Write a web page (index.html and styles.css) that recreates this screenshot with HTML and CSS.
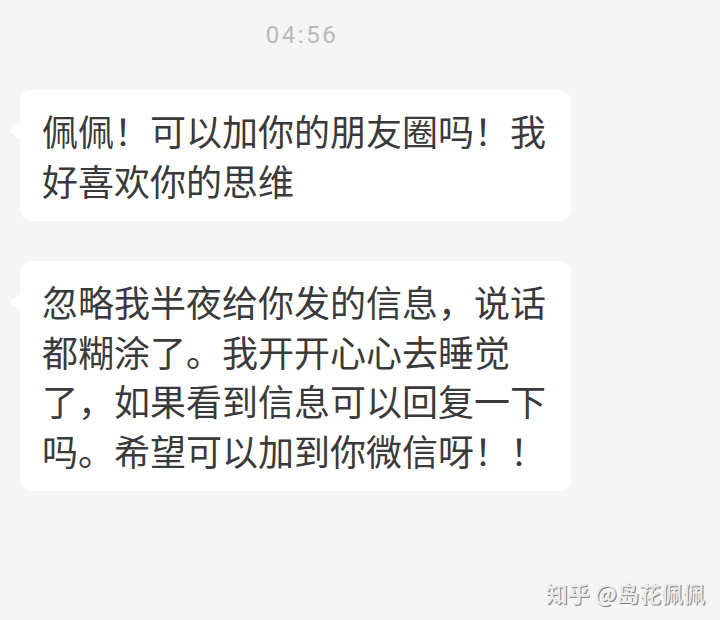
FILE: index.html
```html
<!DOCTYPE html>
<html lang="zh-CN">
<head>
    <meta charset="UTF-8">
    <meta name="viewport" content="width=device-width, initial-scale=1.0">
    <title>聊天记录</title>
    <link rel="stylesheet" href="styles.css">
</head>
<body>

<div class="chat">
    <div class="time">04:56</div>

    <div class="msg">
        <div class="bubble">佩佩！可以加你的朋友圈吗！我好喜欢你的思维</div>
    </div>

    <div class="msg">
        <div class="bubble">忽略我半夜给你发的信息，说话都糊涂了。我开开心心去睡觉了，如果看到信息可以回复一下吗。希望可以加到你微信呀！！</div>
    </div>
</div>

<div class="watermark">知乎 @岛花佩佩</div>

</body>
</html>
```

FILE: styles.css
```css
body {
    margin: 0;
    height: 620px;
    background-color: #f5f5f5;
    font-family: "Noto Sans CJK SC", "Noto Sans", sans-serif;
    position: relative;
    overflow: hidden;
}
.chat {
    padding: 20px 0 0 20px;
}
.time {
    text-align: center;
    padding-right: 136px;
    font-family: Roboto, "Liberation Sans", sans-serif;
    font-size: 24px;
    line-height: 30px;
    letter-spacing: 2.5px;
    color: #b9b9b9;
    margin-bottom: 40px;
}
.msg {
    margin-bottom: 40px;
}
.bubble {
    position: relative;
    width: 506px;
    padding: 16px 23px 16px 22px;
    background-color: #fff;
    border-radius: 12px;
    font-size: 36px;
    line-height: 49.5px;
    color: #3a3a3a;
}
.bubble::before {
    content: "";
    position: absolute;
    left: -11px;
    top: 32px;
    border-top: 9px solid transparent;
    border-bottom: 9px solid transparent;
    border-right: 12px solid #fff;
}
.watermark {
    position: absolute;
    right: 15px;
    bottom: 16px;
    font-size: 22px;
    line-height: 24px;
    font-weight: 700;
    color: #eaeaea;
    text-shadow: 1px 1px 0 #808080;
}
```
